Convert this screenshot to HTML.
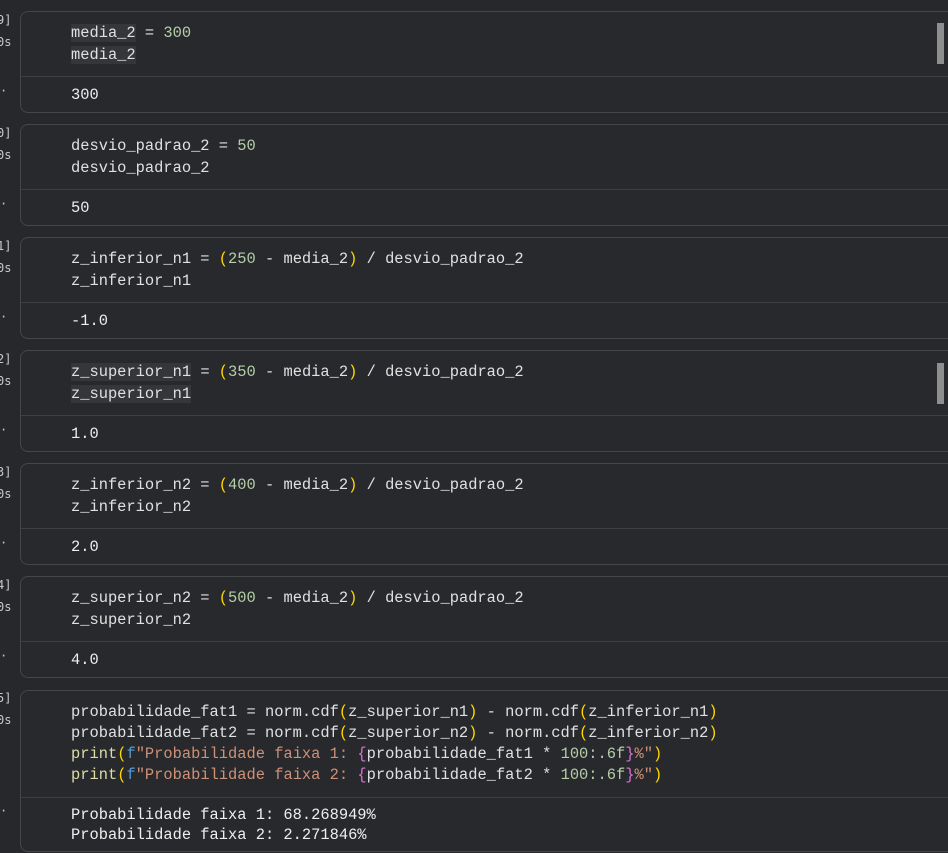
<!DOCTYPE html>
<html><head><meta charset="utf-8"><style>
body{margin:0;width:948px;height:853px;background:#27282b;overflow:hidden;position:relative;font-family:"Liberation Mono","DejaVu Sans Mono",monospace;font-size:15.4px;color:#e0e0e0}
.cell{position:absolute;left:20px;width:940px;border:1px solid #45464a;border-radius:8px;background:#28292c;box-sizing:border-box}
.div{position:absolute;left:0;right:0;height:1px;background:#3e3f43}
.ln{position:absolute;left:50px;white-space:pre;line-height:21px}
.g{position:absolute;left:0;font-size:12px;color:#c8c8c8;font-family:"DejaVu Sans Mono",monospace}
.n{color:#b5cea8}.p{color:#ffd700}.f{color:#dcdcaa}.b{color:#569cd6}.s{color:#ce9178}.m{color:#da70d6}
.o{color:#eeeeee}
.hl{background:#35363a}
.sb{position:absolute;left:937px;width:7px;height:41px;background:#8e8e8e}
</style></head><body>

<div class="g" style="top:13px;left:-3px">9]</div><div class="g" style="top:35px;left:-3px">0s</div><div class="g" style="top:84px">·</div>
<div class="cell" style="top:11px;height:102px">
<div class="ln" style="top:11px"><span class="hl">media_2</span> = <span class="n">300</span></div>
<div class="ln" style="top:33px"><span class="hl">media_2</span></div>
<div class="div" style="top:64px"></div>
<div class="ln o" style="top:73px">300</div></div>

<div class="g" style="top:126px;left:-3px">0]</div><div class="g" style="top:148px;left:-3px">0s</div><div class="g" style="top:197px">·</div>
<div class="cell" style="top:124px;height:102px">
<div class="ln" style="top:11px">desvio_padrao_2 = <span class="n">50</span></div>
<div class="ln" style="top:33px">desvio_padrao_2</div>
<div class="div" style="top:64px"></div>
<div class="ln o" style="top:73px">50</div></div>

<div class="g" style="top:239px;left:-3px">1]</div><div class="g" style="top:261px;left:-3px">0s</div><div class="g" style="top:310px">·</div>
<div class="cell" style="top:237px;height:102px">
<div class="ln" style="top:11px">z_inferior_n1 = <span class="p">(</span><span class="n">250</span> - media_2<span class="p">)</span> / desvio_padrao_2</div>
<div class="ln" style="top:33px">z_inferior_n1</div>
<div class="div" style="top:64px"></div>
<div class="ln o" style="top:73px">-1.0</div></div>

<div class="g" style="top:352px;left:-3px">2]</div><div class="g" style="top:374px;left:-3px">0s</div><div class="g" style="top:423px">·</div>
<div class="cell" style="top:350px;height:102px">
<div class="ln" style="top:11px"><span class="hl">z_superior_n1</span> = <span class="p">(</span><span class="n">350</span> - media_2<span class="p">)</span> / desvio_padrao_2</div>
<div class="ln" style="top:33px"><span class="hl">z_superior_n1</span></div>
<div class="div" style="top:64px"></div>
<div class="ln o" style="top:73px">1.0</div></div>

<div class="g" style="top:465px;left:-3px">3]</div><div class="g" style="top:487px;left:-3px">0s</div><div class="g" style="top:536px">·</div>
<div class="cell" style="top:463px;height:102px">
<div class="ln" style="top:11px">z_inferior_n2 = <span class="p">(</span><span class="n">400</span> - media_2<span class="p">)</span> / desvio_padrao_2</div>
<div class="ln" style="top:33px">z_inferior_n2</div>
<div class="div" style="top:64px"></div>
<div class="ln o" style="top:73px">2.0</div></div>

<div class="g" style="top:578px;left:-3px">4]</div><div class="g" style="top:600px;left:-3px">0s</div><div class="g" style="top:649px">·</div>
<div class="cell" style="top:576px;height:102px">
<div class="ln" style="top:11px">z_superior_n2 = <span class="p">(</span><span class="n">500</span> - media_2<span class="p">)</span> / desvio_padrao_2</div>
<div class="ln" style="top:33px">z_superior_n2</div>
<div class="div" style="top:64px"></div>
<div class="ln o" style="top:73px">4.0</div></div>

<div class="g" style="top:691px;left:-3px">5]</div><div class="g" style="top:713px;left:-3px">0s</div><div class="g" style="top:804px">·</div>
<div class="cell" style="top:690px;height:162px">
<div class="ln" style="top:11px">probabilidade_fat1 = norm.cdf<span class="p">(</span>z_superior_n1<span class="p">)</span> - norm.cdf<span class="p">(</span>z_inferior_n1<span class="p">)</span></div>
<div class="ln" style="top:32px">probabilidade_fat2 = norm.cdf<span class="p">(</span>z_superior_n2<span class="p">)</span> - norm.cdf<span class="p">(</span>z_inferior_n2<span class="p">)</span></div>
<div class="ln" style="top:53px"><span class="f">print</span><span class="p">(</span><span class="b">f</span><span class="s">"Probabilidade faixa 1: </span><span class="m">{</span>probabilidade_fat1 * <span class="n">100</span><span class="n">:.6f</span><span class="m">}</span><span class="s">%"</span><span class="p">)</span></div>
<div class="ln" style="top:74px"><span class="f">print</span><span class="p">(</span><span class="b">f</span><span class="s">"Probabilidade faixa 2: </span><span class="m">{</span>probabilidade_fat2 * <span class="n">100</span><span class="n">:.6f</span><span class="m">}</span><span class="s">%"</span><span class="p">)</span></div>
<div class="div" style="top:106px"></div>
<div class="ln o" style="top:114px">Probabilidade faixa 1: 68.268949%</div>
<div class="ln o" style="top:134px">Probabilidade faixa 2: 2.271846%</div></div>

<div class="sb" style="top:23px"></div>
<div class="sb" style="top:363px"></div>
</body></html>
